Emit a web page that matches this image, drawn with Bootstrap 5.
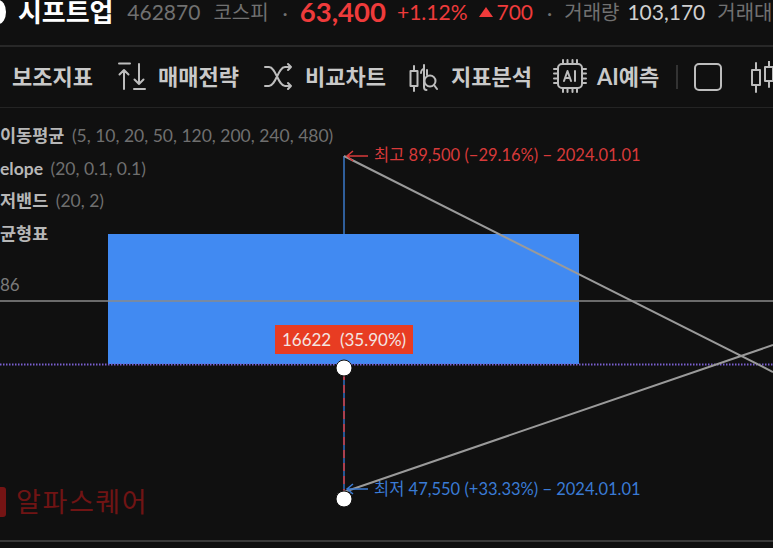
<!DOCTYPE html>
<html lang="ko"><head><meta charset="utf-8">
<link href="https://cdn.jsdelivr.net/npm/bootstrap@5.3.0/dist/css/bootstrap.min.css" rel="stylesheet">
<script src="https://cdn.jsdelivr.net/npm/bootstrap@5.3.0/dist/js/bootstrap.bundle.min.js"></script>
<style>
html,body{margin:0;height:548px;overflow:hidden;background:#101010}
body{font-family:Lato,"Noto Sans CJK KR",sans-serif;color:#fff}
.stock-bar{height:47px;border-bottom:2px solid #282828;padding-bottom:21px;white-space:nowrap;overflow:hidden;margin-left:-9px;width:782px}
.stock-bar>*{flex:none}
.logo-dot{width:15px;height:24px;border-radius:50%;background:#fff;margin-right:12px}
.stock-name{font-size:26px;font-weight:700;line-height:24px;margin-right:14px;letter-spacing:-.1px}
.muted-txt{color:#717171;font-size:20px;line-height:24px}
.code-txt{font-size:21px;margin-right:13px}
.dot-a{margin-left:14px}
.dot-b{margin-left:14px;margin-right:12px}
.red-txt{color:#ef3b3b}
.price{font-size:27.500px;font-weight:700;line-height:24px;margin:0 11px 0 12px}
.chg{font-size:21px;line-height:24px}
.tri{margin:0 3px 0 12px}
.vol{color:#d0d0d0;font-size:21px;line-height:24px;margin:0 12px 0 8px}
.tool-bar{height:61px;border-bottom:1px solid #242424;white-space:nowrap;overflow:hidden;width:800px;padding-left:12px}
.tool-bar>*{flex:none}
.tool-lbl{font-size:22px;font-weight:700;color:#c9c9c9;line-height:24px}
.tool-bar svg{fill:none;stroke:#bdbdbd;stroke-width:2;stroke-linecap:round;stroke-linejoin:round}
.ic-a{margin:0 12px 0 23px}.ic-b{margin:0 12px 0 24px}.ic-c{margin:0 11px 0 22px}.ic-d{margin:-2px 10px 0 21px}.ic-e{margin-left:15px}.ic-f{margin-left:27px}
.sep-v{width:2px;height:24px;background:#333;margin-left:17px}
.chart-area{height:440px;width:773px;overflow:hidden}
.chart-svg{position:absolute;left:0;top:0}
.legend-row{position:absolute;left:0;font-size:17.500px;line-height:24px;color:#6f6f6f;white-space:nowrap}
.legend-row b{color:#b7b7b7;font-weight:700;margin-right:3px}
.axis-val{position:absolute;left:0;top:165px;font-size:17px;line-height:24px;color:#7a7a7a}
.pct-tag{position:absolute;left:275px;top:217px;width:138px;height:29px;background:#e83c22;color:#f3e6e2;font-size:17px;line-height:29px;text-align:center;white-space:pre}
.hl-lbl{position:absolute;left:374px;font-size:16.500px;line-height:20px;white-space:nowrap}
.hi-c{color:#d83a3a}.lo-c{color:#3a7bd5}
.hi-pos{top:37px}.lo-pos{top:371px}
.row-a{top:16px}.row-b{top:49px}.row-c{top:81px}.row-d{top:114px}
.brand{position:absolute;left:16px;top:376px;font-size:27px;font-weight:400;line-height:36px;letter-spacing:1.600px;color:#701414}
.brand-mark{position:absolute;left:-6px;top:379px;width:12px;height:30px;background:#751414;border-radius:3px}
.foot-line{position:absolute;left:0;top:432px;width:773px;height:2px;background:#3a3a3a}
</style></head><body>
<div class="stock-bar d-flex align-items-center">
<span class="logo-dot"></span><span class="stock-name">시프트업</span>
<span class="muted-txt code-txt">462870</span><span class="muted-txt">코스피</span>
<span class="muted-txt dot-a">·</span>
<span class="price red-txt">63,400</span>
<span class="chg red-txt">+1.12%</span>
<svg class="tri" width="14" height="10" viewBox="0 0 14 10"><path d="M7 0 14 10H0z" fill="#ef3b3b"/></svg>
<span class="chg red-txt">700</span>
<span class="muted-txt dot-b">·</span>
<span class="muted-txt">거래량</span><span class="vol">103,170</span><span class="muted-txt">거래대금</span>
</div>
<div class="tool-bar d-flex align-items-center">
<span class="tool-lbl">보조지표</span>
<svg class="ic-a" width="30" height="30" viewBox="0 0 30 30"><path d="M3 1.500H14M8 8V27M3.500 12.500 8 8 12.500 12.500M23 2V22M18.500 17.500 23 22 27.500 17.500M18 27H29"/></svg>
<span class="tool-lbl">매매전략</span>
<svg class="ic-b" width="30" height="30" viewBox="0 0 30 30"><path d="M2 5H6C13 5 15 24 22 24H28M2 24H6C13 24 15 5 22 5H28M25 2 28 5 25 8M25 21 28 24 25 27"/></svg>
<span class="tool-lbl">비교차트</span>
<svg class="ic-c" width="32" height="32" viewBox="0 0 32 32"><path d="M6 5V10M6 25V30M2.500 10H9.500V25H2.500ZM16 4V26C16 28 17 29 18.500 29"/><path d="M13 12C13 9 15 8 16 8M19 14V9"/><circle cx="22" cy="20" r="5.500"/><path d="M26 24 29 28"/></svg>
<span class="tool-lbl">지표분석</span>
<svg class="ic-d" width="34" height="34" viewBox="0 0 34 34"><rect x="5" y="5" width="24" height="24" rx="4"/><path d="M10 1V5M14.500 1V5M19.500 1V5M24 1V5M10 29V33M14.500 29V33M19.500 29V33M24 29V33M1 10H5M1 14.500H5M1 19.500H5M1 24H5M29 10H33M29 14.500H33M29 19.500H33M29 24H33"/><path d="M11 22 14.500 12 18 22M12.500 19H16.500M22 12V22"/></svg>
<span class="tool-lbl">AI예측</span>
<span class="sep-v"></span>
<svg class="ic-e" width="30" height="30" viewBox="0 0 30 30"><rect x="2" y="2" width="26" height="26" rx="4"/></svg>
<svg class="ic-f" width="44" height="32" viewBox="0 0 44 32"><path d="M6 2V9M6 24V31M2 9H10V24H2ZM19 0V6M19 20V26M15 6H23V20H15Z"/></svg>
</div>
<div class="chart-area position-relative">
<svg class="chart-svg" width="773" height="440" viewBox="0 108 773 440">
<rect x="108" y="234" width="471" height="130" fill="#418af2"/>
<path d="M344 156V234" stroke="#3a78c8" stroke-width="1.500"/>
<path d="M344 368V492" stroke="#2f6fc0" stroke-width="1.500"/>
<path d="M344 372V492" stroke="#d83a3a" stroke-width="1.500" stroke-dasharray="8 5"/>
<path d="M0 301H773" stroke="#8a8a8a" stroke-width="1.500"/>
<path d="M0 364.500H773" stroke="#7a5fd0" stroke-width="2" stroke-dasharray="1.500 1.500"/>
<path d="M344 156 773 372M344 492 773 345" stroke="#9a9a9a" stroke-width="2" fill="none"/>
<path d="M347 156H368M353 151 347 156 353 161" stroke="#d83a3a" stroke-width="1.500" fill="none"/>
<path d="M347 489H368M353 484 347 489 353 494" stroke="#3a7bd5" stroke-width="1.500" fill="none"/>
<circle cx="344" cy="368" r="8" fill="#fff" stroke="#101010" stroke-width="1"/>
<circle cx="344" cy="499" r="8" fill="#fff" stroke="#101010" stroke-width="1"/>
</svg>
<div class="legend-row row-a"><b>이동평균</b> (5, 10, 20, 50, 120, 200, 240, 480)</div>
<div class="legend-row row-b"><b>elope</b> (20, 0.1, 0.1)</div>
<div class="legend-row row-c"><b>저밴드</b> (20, 2)</div>
<div class="legend-row row-d"><b>균형표</b></div>
<div class="axis-val">86</div>
<div class="pct-tag">16622  (35.90%)</div>
<div class="hl-lbl hi-c hi-pos">최고 89,500 (−29.16%) − 2024.01.01</div>
<div class="hl-lbl lo-c lo-pos">최저 47,550 (+33.33%) − 2024.01.01</div>
<span class="brand-mark"></span><div class="brand">알파스퀘어</div>
<div class="foot-line"></div>
</div>
</body></html>
